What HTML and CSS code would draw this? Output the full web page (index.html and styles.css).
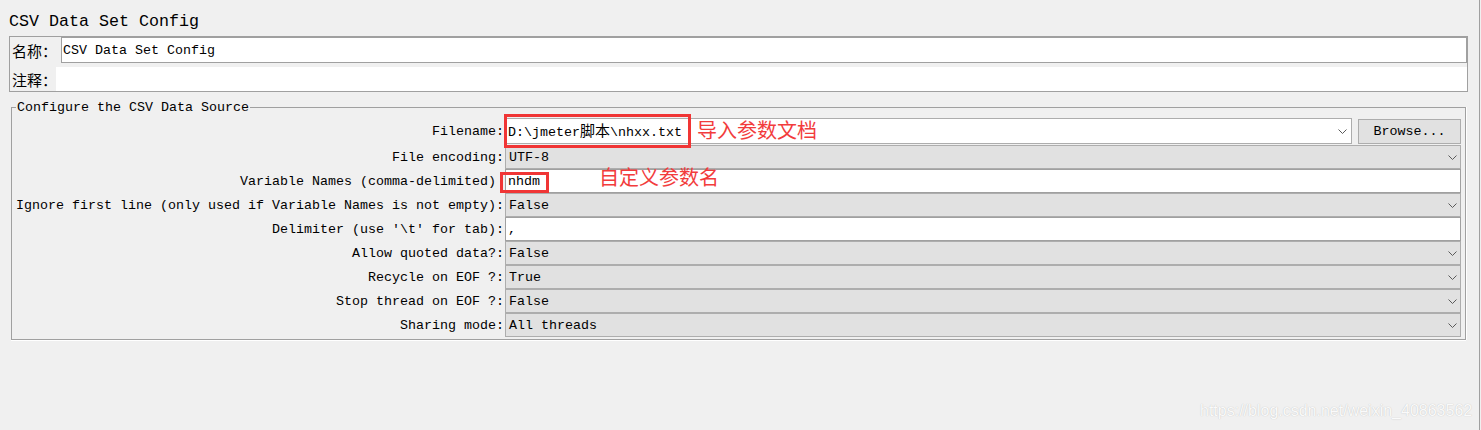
FILE: index.html
```html
<!DOCTYPE html>
<html lang="zh-CN">
<head>
<meta charset="utf-8">
<title>CSV Data Set Config</title>
<link rel="stylesheet" href="styles.css">
</head>
<body>
<div class="page">
  <div class="title">CSV Data Set Config</div>

  <div class="panel">
    <div class="prow1">
      <span class="plabel cj">名称：</span>
      <div class="ptext">CSV Data Set Config</div>
    </div>
    <div class="prow2">
      <span class="plabel2 cj">注释：</span>
      <div class="pwhite"></div>
    </div>
  </div>

  <fieldset class="group">
    <legend>Configure the CSV Data Source</legend>
    <div class="grid">
      <div class="lbl">Filename:</div>
      <div class="fileline">
        <div class="combo edit"><span>D:\jmeter<span class="cj">脚本</span>\nhxx.txt</span><svg class="chev" width="9" height="5" viewBox="0 0 9 5"><polyline points="0.5,0.5 4.5,4.5 8.5,0.5"/></svg></div>
        <button class="browse">Browse...</button>
      </div>

      <div class="lbl">File encoding:</div>
      <div class="combo"><span>UTF-8</span><svg class="chev" width="9" height="5" viewBox="0 0 9 5"><polyline points="0.5,0.5 4.5,4.5 8.5,0.5"/></svg></div>

      <div class="lbl nocolon">Variable Names (comma-delimited)</div>
      <div class="field">nhdm</div>

      <div class="lbl">Ignore first line (only used if Variable Names is not empty):</div>
      <div class="combo"><span>False</span><svg class="chev" width="9" height="5" viewBox="0 0 9 5"><polyline points="0.5,0.5 4.5,4.5 8.5,0.5"/></svg></div>

      <div class="lbl">Delimiter (use '\t' for tab):</div>
      <div class="field">,</div>

      <div class="lbl">Allow quoted data?:</div>
      <div class="combo"><span>False</span><svg class="chev" width="9" height="5" viewBox="0 0 9 5"><polyline points="0.5,0.5 4.5,4.5 8.5,0.5"/></svg></div>

      <div class="lbl">Recycle on EOF ?:</div>
      <div class="combo"><span>True</span><svg class="chev" width="9" height="5" viewBox="0 0 9 5"><polyline points="0.5,0.5 4.5,4.5 8.5,0.5"/></svg></div>

      <div class="lbl">Stop thread on EOF ?:</div>
      <div class="combo"><span>False</span><svg class="chev" width="9" height="5" viewBox="0 0 9 5"><polyline points="0.5,0.5 4.5,4.5 8.5,0.5"/></svg></div>

      <div class="lbl">Sharing mode:</div>
      <div class="combo"><span>All threads</span><svg class="chev" width="9" height="5" viewBox="0 0 9 5"><polyline points="0.5,0.5 4.5,4.5 8.5,0.5"/></svg></div>
    </div>
  </fieldset>

  <div class="mark mark-file"></div>
  <div class="note note-file">导入参数文档</div>
  <div class="mark mark-var"></div>
  <div class="note note-var">自定义参数名</div>

  <div class="watermark">https://blog.csdn.net/weixin_40863562</div>
</div>
</body>
</html>
```

FILE: styles.css
```css
html, body {
  margin: 0;
  padding: 0;
}

body {
  background: #f0f0f0;
  font-family: "Liberation Mono", "Noto Sans CJK SC", monospace;
  font-size: 13.333px;
  color: #000;
  overflow: hidden;
}

.page {
  position: relative;
  width: 1480px;
  height: 430px;
  box-sizing: border-box;
  border-right: 1px solid #a0a0a0;
}

.cj {
  font-family: "Noto Sans CJK SC", sans-serif;
  font-size: 15px;
  line-height: 1;
}

.title {
  font-size: 16.667px;
  line-height: 20px;
  height: 20px;
  padding: 12px 0 0 9px;
  margin-bottom: 4px;
}

/* name / comment panel */
.panel {
  margin: 0 11px 0 9px;
  border: 1px solid #a0a0a0;
}

.prow1 {
  display: flex;
  align-items: center;
  height: 26px;
}

.plabel {
  width: 51px;
  padding-left: 2px;
  box-sizing: border-box;
  flex: none;
  white-space: nowrap;
}

.ptext {
  flex: 1;
  align-self: stretch;
  display: flex;
  align-items: center;
  background: #fff;
  border: 1px solid #a0a0a0;
  padding-left: 1px;
}

.prow2 {
  display: flex;
  align-items: center;
  height: 24px;
  margin-top: 4px;
}

.plabel2 {
  width: 46px;
  padding-left: 2px;
  box-sizing: border-box;
  flex: none;
  white-space: nowrap;
}

.pwhite {
  flex: 1;
  align-self: stretch;
  background: #fff;
}

/* CSV data source group */
.group {
  margin: 7px 13px 0 11px;
  padding: 3px 4px 2px 0;
  border: 1px solid #a0a0a0;
  box-shadow: 0 1px 0 #fff, 1px 0 0 #fff;
  min-width: 0;
}

.group legend {
  margin-left: 4px;
  padding: 1px 1px 0;
  line-height: 15px;
  font-size: 13.333px;
}

.grid {
  display: grid;
  grid-template-columns: 493px 1fr;
  grid-template-rows: 27px repeat(8, 24px);
}

.lbl {
  align-self: center;
  text-align: right;
  padding-right: 1px;
  white-space: nowrap;
}

.lbl.nocolon {
  padding-right: 9px;
}

.fileline {
  display: flex;
  align-items: flex-start;
  gap: 6px;
}

.combo {
  display: flex;
  align-items: center;
  justify-content: space-between;
  border: 1px solid #adadad;
  background: #e1e1e1;
  padding: 0 3px 0 3px;
  white-space: nowrap;
}

.combo.edit {
  flex: 1;
  height: 26px;
  box-sizing: border-box;
  background: #fff;
  padding: 0 4px 0 2px;
}

.chev {
  flex: none;
  fill: none;
  stroke: #5a5a5a;
  stroke-width: 1;
}

.field {
  display: flex;
  align-items: center;
  border: 1px solid #a0a0a0;
  background: #fff;
  padding-left: 2px;
}

.browse {
  flex: none;
  width: 103px;
  height: 25px;
  margin-top: 1px;
  border: 1px solid #adadad;
  background: #e1e1e1;
  font: inherit;
  color: #000;
  padding: 0;
}

/* red annotations drawn over the form */
.mark {
  position: absolute;
  box-sizing: border-box;
  border: 3px solid #f03535;
}

.mark-file {
  left: 504px;
  top: 114px;
  width: 187px;
  height: 34px;
}

.mark-var {
  left: 500px;
  top: 172px;
  width: 49px;
  height: 21px;
}

.note {
  position: absolute;
  font-family: "Noto Sans CJK SC", sans-serif;
  font-size: 20px;
  line-height: 24px;
  color: #f23c3c;
  white-space: nowrap;
}

.note-file {
  left: 697px;
  top: 118px;
}

.note-var {
  left: 599px;
  top: 165px;
}

.watermark {
  position: absolute;
  left: 1200px;
  top: 401px;
  font-family: "Liberation Sans", Arial, sans-serif;
  font-size: 16px;
  line-height: 20px;
  color: #fafafa;
  text-shadow: 0 0 1px #b8b8b8;
  white-space: nowrap;
}
```
